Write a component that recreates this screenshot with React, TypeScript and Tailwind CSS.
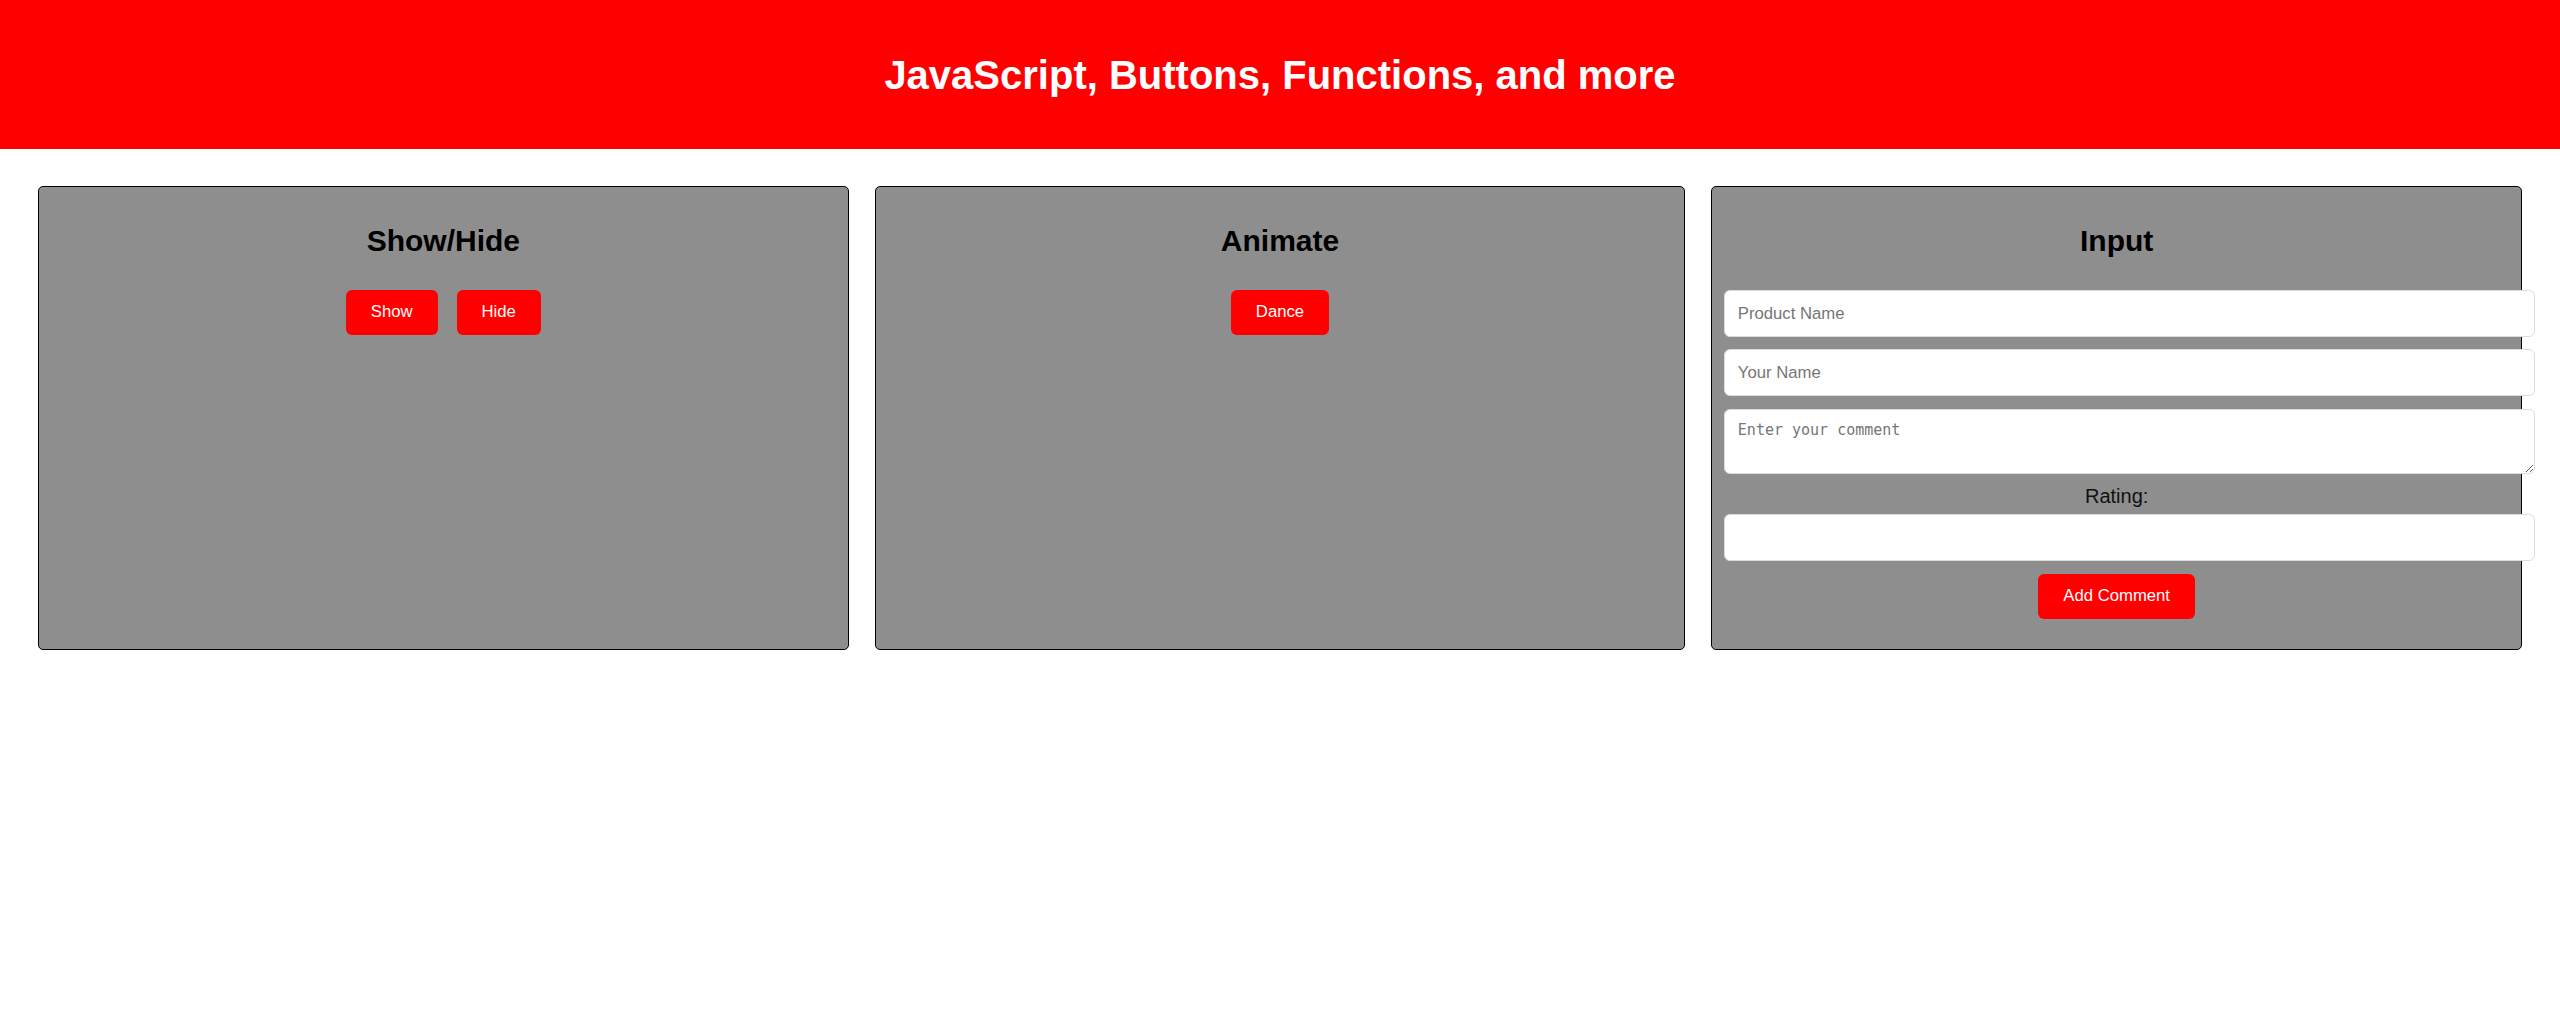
import React from "react";

const font = { fontFamily: '"Liberation Sans", Arial, sans-serif' };

function RedButton({ label }: { label: string }) {
  return (
    <button className="h-[45px] px-[25px] rounded-[6px] bg-[#ff0000] text-white text-[16.7px] leading-none">
      {label}
    </button>
  );
}

function Panel({ title, children }: { title: string; children: React.ReactNode }) {
  return (
    <section className="h-[464px] rounded-[5px] border border-black bg-[#8e8e8e] pt-[37px] px-[12px] flex flex-col items-center">
      <h2 className="text-[30px] leading-[34px] font-bold text-black">{title}</h2>
      {children}
    </section>
  );
}

const fieldClass =
  "self-start w-[calc(100%+26px)] h-[47px] rounded-[6px] border border-[#dcdcdc] bg-white px-[12.5px] text-[16.7px] text-black placeholder:text-[#767676] outline-none";

export default function App() {
  return (
    <main className="min-h-screen bg-white" style={font}>
      <header className="h-[149px] bg-[#ff0000] flex items-center justify-center">
        <h1 className="text-[40px] leading-[46px] font-bold text-white">
          JavaScript, Buttons, Functions, and more
        </h1>
      </header>

      <div className="grid grid-cols-3 gap-[26px] px-[38px] pt-[37px]">
        <Panel title="Show/Hide">
          <div className="mt-[32px] flex gap-[19px]">
            <RedButton label="Show" />
            <RedButton label="Hide" />
          </div>
        </Panel>

        <Panel title="Animate">
          <div className="mt-[32px] flex">
            <RedButton label="Dance" />
          </div>
        </Panel>

        <Panel title="Input">
          <input className={`${fieldClass} mt-[32px]`} placeholder="Product Name" />
          <input className={`${fieldClass} mt-[12px]`} placeholder="Your Name" />
          <textarea
            className="self-start mt-[13px] w-[calc(100%+26px)] h-[65px] rounded-[6px] border border-[#dcdcdc] bg-white px-[12.5px] pt-[11px] text-[15px] leading-[19px] placeholder:text-[#767676] outline-none"
            style={{ fontFamily: '"DejaVu Sans Mono", monospace' }}
            placeholder="Enter your comment"
          />
          <label className="mt-[11px] text-[20px] leading-[23px] text-[#111]">Rating:</label>
          <input className={`${fieldClass} mt-[6px]`} />
          <div className="mt-[13px]">
            <RedButton label="Add Comment" />
          </div>
        </Panel>
      </div>
    </main>
  );
}
